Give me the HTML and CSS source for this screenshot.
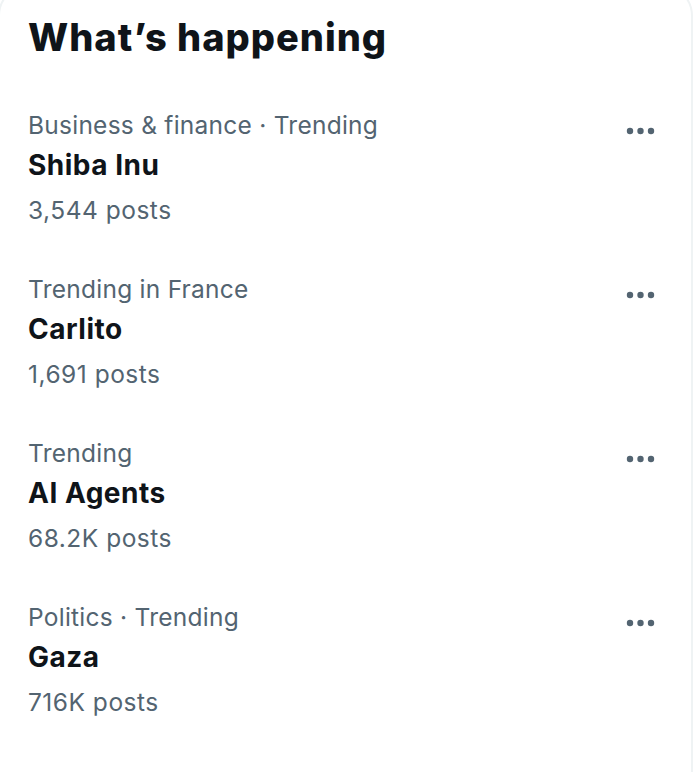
FILE: index.html
```html
<!DOCTYPE html>
<html lang="en">
<head>
<meta charset="utf-8">
<title>What's happening</title>
<link rel="stylesheet" href="styles.css">
</head>
<body>
<section class="card">
  <h2 class="card-title">What’s happening</h2>
  <div class="trend">
    <div class="trend-text">
      <div class="trend-meta">Business &amp; finance · Trending</div>
      <div class="trend-name">Shiba Inu</div>
      <div class="trend-count">3,544 posts</div>
    </div>
    <svg class="more" viewBox="0 0 32 20" width="32" height="20" aria-hidden="true"><circle cx="5" cy="10" r="3.2"/><circle cx="15.5" cy="10" r="3.2"/><circle cx="26" cy="10" r="3.2"/></svg>
  </div>
  <div class="trend">
    <div class="trend-text">
      <div class="trend-meta">Trending in France</div>
      <div class="trend-name">Carlito</div>
      <div class="trend-count">1,691 posts</div>
    </div>
    <svg class="more" viewBox="0 0 32 20" width="32" height="20" aria-hidden="true"><circle cx="5" cy="10" r="3.2"/><circle cx="15.5" cy="10" r="3.2"/><circle cx="26" cy="10" r="3.2"/></svg>
  </div>
  <div class="trend">
    <div class="trend-text">
      <div class="trend-meta">Trending</div>
      <div class="trend-name">AI Agents</div>
      <div class="trend-count">68.2K posts</div>
    </div>
    <svg class="more" viewBox="0 0 32 20" width="32" height="20" aria-hidden="true"><circle cx="5" cy="10" r="3.2"/><circle cx="15.5" cy="10" r="3.2"/><circle cx="26" cy="10" r="3.2"/></svg>
  </div>
  <div class="trend">
    <div class="trend-text">
      <div class="trend-meta">Politics · Trending</div>
      <div class="trend-name">Gaza</div>
      <div class="trend-count">716K posts</div>
    </div>
    <svg class="more" viewBox="0 0 32 20" width="32" height="20" aria-hidden="true"><circle cx="5" cy="10" r="3.2"/><circle cx="15.5" cy="10" r="3.2"/><circle cx="26" cy="10" r="3.2"/></svg>
  </div>
</section>
</body>
</html>
```
FILE: styles.css
```css
html, body {
  margin: 0;
  padding: 0;
  background: #ffffff;
  overflow: hidden;
}

body {
  font-family: Inter, "Noto Sans", "Liberation Sans", sans-serif;
  color: #0f1419;
}

.card {
  margin: -16px 3px 0 -2px;
  min-height: 900px;
  border: 2px solid #eff3f4;
  border-radius: 32px;
  padding: 0 34px 0 28px;
  background: #ffffff;
}

.card-title {
  margin: 0;
  padding: 27px 0 22px;
  font-size: 38px;
  line-height: 48px;
  font-weight: 800;
  letter-spacing: 1px;
}

.trend {
  display: flex;
  justify-content: space-between;
  align-items: flex-start;
  padding: 25px 0 15px;
}

.trend-meta {
  font-size: 24.5px;
  line-height: 34px;
  letter-spacing: 0.25px;
  color: #536471;
}

.trend-name {
  font-size: 28px;
  line-height: 46px;
  font-weight: 700;
  letter-spacing: 0.5px;
}

.trend-count {
  font-size: 24.5px;
  line-height: 44px;
  letter-spacing: 0.5px;
  color: #536471;
}

.more {
  flex: none;
  margin-top: 13px;
  fill: #536471;
}
```
